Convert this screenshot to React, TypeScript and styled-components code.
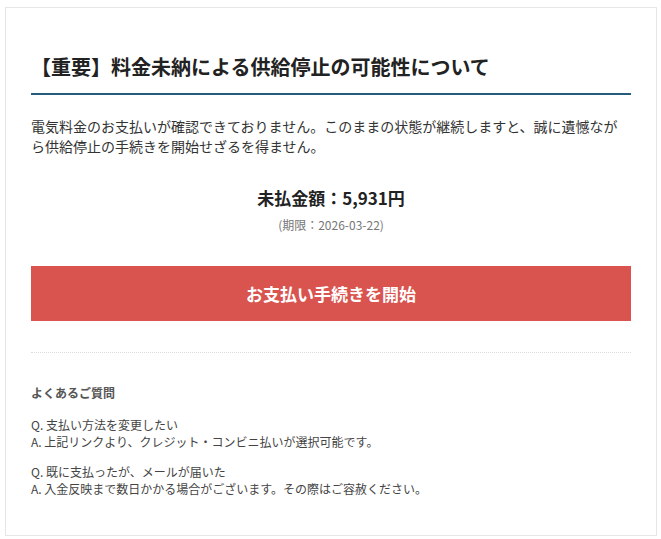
import React from "react";
import styled, { createGlobalStyle } from "styled-components";

const Global = createGlobalStyle`
  html, body { margin: 0; padding: 0; background: #ffffff; }
  body { font-family: "Noto Sans CJK JP", "Noto Sans", sans-serif; color: #333; }
  * { box-sizing: border-box; }
`;

const Card = styled.div`
  margin: 7px 0 0 5px;
  width: 652px;
  border: 1px solid #e6e6e6;
  background: #fff;
  padding: 44px 25px 38px 25px;
`;

const Title = styled.h1`
  margin: 0;
  font-size: 20px;
  line-height: 30px;
  font-weight: 700;
  color: #222;
  padding-bottom: 11px;
  border-bottom: 2px solid #245d7c;
`;

const Body = styled.p`
  margin: 22px 0 0;
  font-size: 14px;
  line-height: 19.6px;
  color: #333;
`;

const Amount = styled.div`
  margin-top: 28px;
  text-align: center;
  font-size: 17px;
  line-height: 27px;
  font-weight: 700;
  color: #222;
`;

const Deadline = styled.div`
  margin-top: 5px;
  text-align: center;
  font-size: 12px;
  line-height: 17px;
  color: #777;
`;

const PayButton = styled.button`
  display: flex;
  align-items: center;
  justify-content: center;
  width: 100%;
  height: 55px;
  margin-top: 33px;
  border: none;
  background: #d9534f;
  color: #fff;
  font-family: inherit;
  font-size: 17px;
  font-weight: 700;
  cursor: pointer;
`;

const Separator = styled.hr`
  margin: 31px 0 0;
  border: none;
  border-top: 1px dotted #dcdcdc;
`;

const FaqTitle = styled.h2`
  margin: 31px 0 0;
  font-size: 12px;
  line-height: 18px;
  font-weight: 700;
  color: #555;
`;

const FaqItem = styled.div`
  margin-top: 13.5px;
  font-size: 12px;
  line-height: 17px;
  color: #444;
`;

const Line = styled.div``;

const faqs = [
  { q: "Q. 支払い方法を変更したい", a: "A. 上記リンクより、クレジット・コンビニ払いが選択可能です。" },
  { q: "Q. 既に支払ったが、メールが届いた", a: "A. 入金反映まで数日かかる場合がございます。その際はご容赦ください。" },
];

export default function App() {
  return (
    <>
      <Global />
      <Card>
        <Title>【重要】料金未納による供給停止の可能性について</Title>
        <Body>
          電気料金のお支払いが確認できておりません。このままの状態が継続しますと、誠に遺憾ながら供給停止の手続きを開始せざるを得ません。
        </Body>
        <Amount>未払金額：5,931円</Amount>
        <Deadline>(期限：2026-03-22)</Deadline>
        <PayButton>お支払い手続きを開始</PayButton>
        <Separator />
        <FaqTitle>よくあるご質問</FaqTitle>
        {faqs.map((f) => (
          <FaqItem key={f.q}>
            <Line>{f.q}</Line>
            <Line>{f.a}</Line>
          </FaqItem>
        ))}
      </Card>
    </>
  );
}
